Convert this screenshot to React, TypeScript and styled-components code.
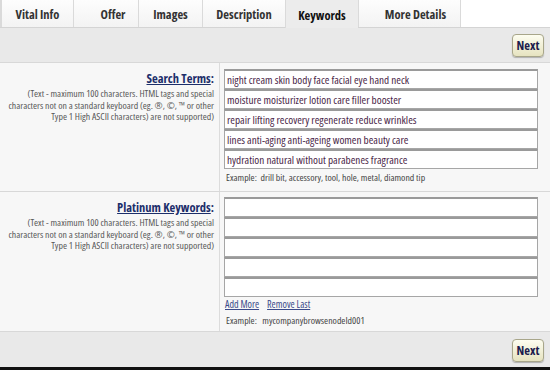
import React from 'react'
import styled, { createGlobalStyle } from 'styled-components'

const GlobalStyle = createGlobalStyle`
  body {
    margin: 0;
    background: #ececec;
    font-family: "Open Sans", "DejaVu Sans", sans-serif;
    font-stretch: 75%;
  }
`

const tabs = [
  { label: 'Vital Info', width: 73, shift: 0 },
  { label: 'Offer', width: 65, shift: 14 },
  { label: 'Images', width: 64, shift: 0 },
  { label: 'Description', width: 83, shift: 0 },
  { label: 'Keywords', width: 73, shift: 0 },
  { label: 'More Details', width: 102, shift: 12 },
]

const searchTerms = [
  'night cream skin body face facial eye hand neck',
  'moisture moisturizer lotion care filler booster',
  'repair lifting recovery regenerate reduce wrinkles',
  'lines anti-aging anti-ageing women beauty care',
  'hydration natural without parabenes fragrance',
]

const helpLines = [
  '(Text - maximum 100 characters. HTML tags and special',
  'characters not on a standard keyboard (eg. ®, ©, ™ or other',
  'Type 1 High ASCII characters) are not supported)',
]

function HelpText() {
  return (
    <Help>
      {helpLines.map((l) => (
        <div key={l}>{l}</div>
      ))}
    </Help>
  )
}

export default function App() {
  return (
    <Page>
      <GlobalStyle />
      <TabBar>
        {tabs.map((t) => (
          <Tab key={t.label} $w={t.width} $shift={t.shift} $active={t.label === 'Keywords'}>
            {t.label}
          </Tab>
        ))}
        <TabFill />
      </TabBar>

      <ButtonBar>
        <NextButton>Next</NextButton>
      </ButtonBar>

      <Section $h={129}>
        <LabelCell>
          <FieldTitle>Search Terms</FieldTitle>:
          <HelpText />
        </LabelCell>
        <FieldCell $top={6}>
          <InputStack>
            {searchTerms.map((s) => (
              <TextBox key={s} defaultValue={s} />
            ))}
          </InputStack>
          <Example $gap={3}>Example:&nbsp; drill bit, accessory, tool, hole, metal, diamond tip</Example>
        </FieldCell>
      </Section>

      <Section $h={140}>
        <LabelCell>
          <FieldTitle>Platinum Keywords</FieldTitle>:
          <HelpText />
        </LabelCell>
        <FieldCell $top={5}>
          <InputStack>
            {[0, 1, 2, 3, 4].map((i) => (
              <TextBox key={i} defaultValue="" />
            ))}
          </InputStack>
          <Links>
            <LinkText>Add More</LinkText>
            <LinkText>Remove Last</LinkText>
          </Links>
          <Example $gap={4}>Example:&nbsp;&nbsp; mycompanybrowsenodeId001</Example>
        </FieldCell>
      </Section>

      <ButtonBar $footer>
        <NextButton>Next</NextButton>
      </ButtonBar>
      <BottomEdge />
    </Page>
  )
}

const Page = styled.div`
  width: 550px;
  height: 370px;
  display: flex;
  flex-direction: column;
  background: #ececec;
  overflow: hidden;
`

const TabBar = styled.div`
  display: flex;
  height: 27px;
  flex-shrink: 0;
  border-bottom: 1px solid #d4d4d4;
  background: #fff;
`

const Tab = styled.div<{ $w: number; $shift: number; $active?: boolean }>`
  width: ${(p) => p.$w}px;
  box-sizing: border-box;
  display: flex;
  align-items: center;
  justify-content: center;
  padding: 2px 0 0 ${(p) => p.$shift}px;
  font-size: 12.5px;
  font-weight: bold;
  color: ${(p) => (p.$active ? '#111' : '#333')};
  background: ${(p) => (p.$active ? '#ececec' : 'linear-gradient(#fdfdfd, #f3f3f3)')};
  border-left: 1px solid #dadada;
  margin-bottom: ${(p) => (p.$active ? '-1px' : '0')};
  &:first-child {
    border-left: 2px solid #dadada;
  }
`

const TabFill = styled.div`
  flex: 1;
  border-left: 1px solid #dadada;
  background: #fff;
`

const ButtonBar = styled.div<{ $footer?: boolean }>`
  height: 35px;
  flex-shrink: 0;
  display: flex;
  align-items: ${(p) => (p.$footer ? 'flex-start' : 'center')};
  justify-content: flex-end;
  padding: ${(p) => (p.$footer ? '7px 6px 0 0' : '0 6px 0 0')};
  box-sizing: border-box;
  background: #e9e9e9;
  border-bottom: ${(p) => (p.$footer ? 'none' : '1px solid #d8d8d8')};
`

const NextButton = styled.button`
  width: 32px;
  height: 23px;
  padding: 0;
  font-family: inherit;
  font-stretch: 75%;
  font-size: 12.5px;
  font-weight: bold;
  color: #1c1c4c;
  border: 1px solid #a8a68a;
  border-radius: 4px;
  background: linear-gradient(#fdfdf0, #e6e3c0);
  box-shadow: 0 1px 1px rgba(0, 0, 0, 0.25);
`

const Section = styled.div<{ $h: number }>`
  height: ${(p) => p.$h}px;
  flex-shrink: 0;
  box-sizing: border-box;
  display: grid;
  grid-template-columns: 220px 1fr;
  background: #f7f7f7;
  border-bottom: 1px solid #d8d8d8;
`

const LabelCell = styled.div`
  text-align: right;
  padding: 7px 5px 0 0;
  border-right: 1px solid #dcdcdc;
  font-size: 12.5px;
  font-weight: bold;
  color: #1c2e6a;
`

const FieldTitle = styled.span`
  text-decoration: underline;
`

const Help = styled.div`
  margin-top: 1px;
  font-size: 9.8px;
  line-height: 11.5px;
  font-weight: normal;
  color: #585858;
  white-space: nowrap;
`

const FieldCell = styled.div<{ $top: number }>`
  padding: ${(p) => p.$top}px 12px 0 4px;
  display: flex;
  flex-direction: column;
`

const InputStack = styled.div`
  display: flex;
  flex-direction: column;
`

const TextBox = styled.input`
  height: 20px;
  box-sizing: border-box;
  margin: 0;
  padding: 0 2px;
  border: 1px solid #a6a6a6;
  border-top: 2px solid #9a9a9a;
  background: #fff;
  font-family: inherit;
  font-stretch: 75%;
  font-size: 11.2px;
  color: #4a1f48;
  outline: none;
`

const Example = styled.div<{ $gap: number }>`
  font-size: 9.8px;
  line-height: 12px;
  color: #444;
  margin-top: ${(p) => p.$gap}px;
  padding-left: 2px;
`

const Links = styled.div`
  display: flex;
  gap: 8px;
  margin-top: 1px;
  padding-left: 1px;
  line-height: 13px;
`

const LinkText = styled.a`
  font-size: 10px;
  color: #3a4a8a;
  text-decoration: underline;
`

const BottomEdge = styled.div`
  flex: 1;
  background: #111;
`
